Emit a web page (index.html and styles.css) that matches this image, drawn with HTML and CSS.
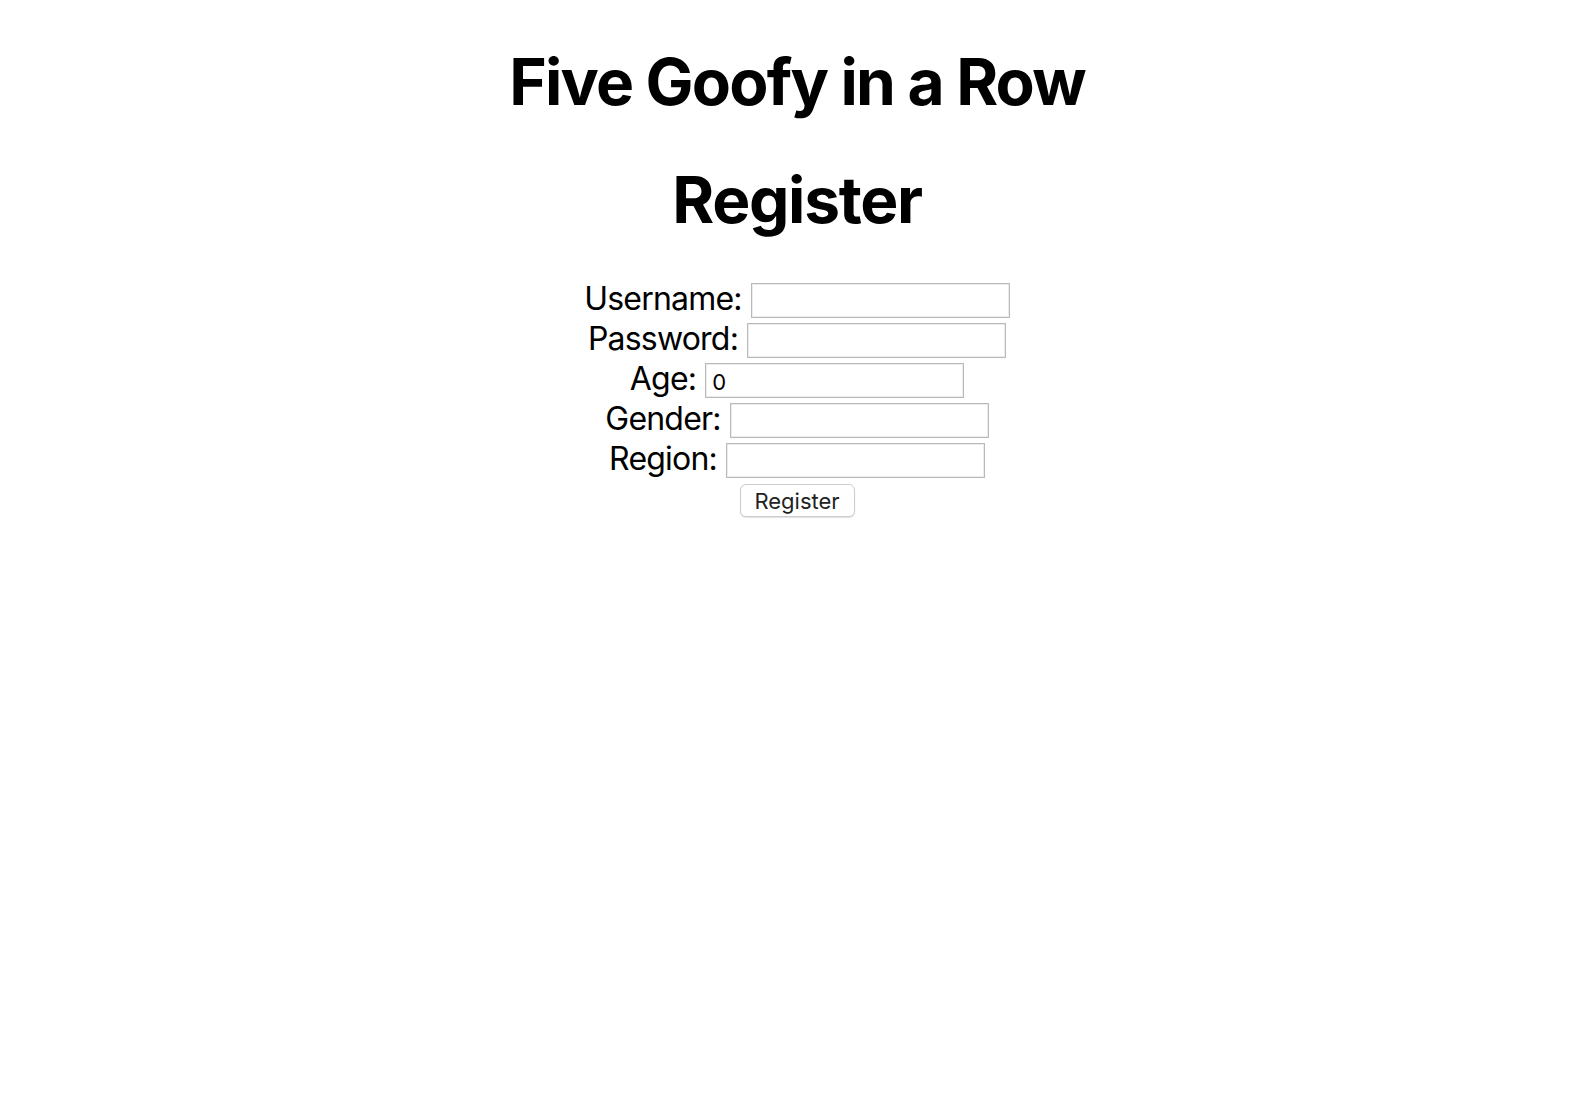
FILE: index.html
```html
<!DOCTYPE html>
<html lang="en">
<head>
<meta charset="utf-8">
<title>Five Goofy in a Row</title>
<link rel="stylesheet" href="styles.css">
</head>
<body>
<div class="app">
  <h1 class="title">Five Goofy in a Row</h1>
  <h2 class="subtitle">Register</h2>
  <form class="form">
    <div class="row"><label class="label">Username:</label><input class="field" type="text"></div>
    <div class="row"><label class="label">Password:</label><input class="field" type="password"></div>
    <div class="row"><label class="label">Age:</label><input class="field" type="text" value="0"></div>
    <div class="row"><label class="label">Gender:</label><input class="field" type="text"></div>
    <div class="row"><label class="label">Region:</label><input class="field" type="text"></div>
    <div class="actions"><button class="btn" type="button">Register</button></div>
  </form>
</div>
</body>
</html>
```

FILE: styles.css
```css
html, body {
  margin: 0;
  padding: 0;
  background: #ffffff;
}
body {
  font-family: Inter, "Liberation Sans", sans-serif;
  color: #000;
}
.app {
  display: flex;
  flex-direction: column;
  align-items: center;
  padding: 8px;
}
.title {
  font-size: 64px;
  font-weight: 700;
  letter-spacing: -1.8px;
  margin: 35px 0 0;
  line-height: 77px;
}
.subtitle {
  font-size: 64px;
  font-weight: 700;
  letter-spacing: -1.3px;
  margin: 41px 0 0;
  line-height: 77px;
}
.form {
  margin-top: 43px;
  display: flex;
  flex-direction: column;
  align-items: center;
}
.row {
  display: flex;
  align-items: flex-start;
  justify-content: center;
  gap: 9px;
  height: 40px;
}
.label {
  font-size: 32px;
  letter-spacing: -0.8px;
  line-height: 35px;
}
.field {
  box-sizing: border-box;
  margin-top: 2px;
  width: 259px;
  height: 35px;
  border: 1px solid #b9b9b9;
  box-shadow: inset 0 0 0 1px #ececec;
  padding: 3px 6px 0;
  font-family: Inter, "Liberation Sans", sans-serif;
  font-size: 22px;
  color: #000;
  background: #fff;
  outline: none;
}
.actions {
  margin-top: 3px;
}
.btn {
  box-sizing: border-box;
  width: 115px;
  height: 33px;
  border: 1px solid #cdcdcd;
  border-radius: 6px;
  background: #fff;
  box-shadow: 0 1px 1px rgba(0,0,0,0.12);
  font-family: Inter, "Liberation Sans", sans-serif;
  font-size: 22px;
  color: #222;
  padding: 0;
}
```
